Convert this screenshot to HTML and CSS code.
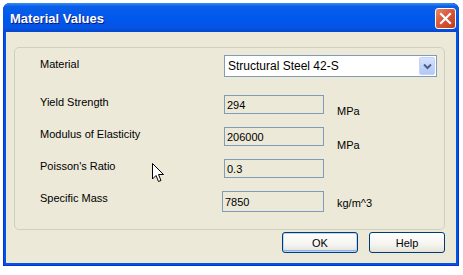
FILE: index.html
```html
<!DOCTYPE html>
<html lang="en">

<head>
    <meta charset="UTF-8">
    <title>Material Values</title>
    <link rel="stylesheet" href="styles.css">
</head>

<body>
    <div class="window">
        <!-- Title bar -->
        <div class="titlebar">
            <span class="title">Material Values</span>
            <button class="close-btn" aria-label="Close">
                <svg width="13" height="13" viewBox="0 0 13 13">
                    <path d="M2 2 L11 11 M11 2 L2 11" stroke="#fff" stroke-width="2.2" stroke-linecap="square" />
                </svg>
            </button>
        </div>

        <div class="client">
            <div class="groupbox">
                <div class="row row-first">
                    <label class="label label-combo">Material</label>
                    <div class="combo">
                        <span class="combo-text">Structural Steel 42-S</span>
                        <span class="combo-arrow">
                            <svg width="9" height="7" viewBox="0 0 9 7">
                                <path d="M1 1.5 L4.5 5 L8 1.5" fill="none" stroke="#4d6185" stroke-width="2" />
                            </svg>
                        </span>
                    </div>
                </div>
                <div class="row">
                    <label class="label">Yield Strength</label>
                    <div class="field">294</div>
                    <span class="unit">MPa</span>
                </div>
                <div class="row">
                    <label class="label">Modulus of Elasticity</label>
                    <div class="field">206000</div>
                    <span class="unit unit-low">MPa</span>
                </div>
                <div class="row">
                    <label class="label">Poisson's Ratio</label>
                    <div class="field">0.3</div>
                </div>
                <div class="row">
                    <label class="label">Specific Mass</label>
                    <div class="field field-mass">7850</div>
                    <span class="unit unit-mass">kg/m^3</span>
                </div>
            </div>

            <div class="buttons">
                <button class="btn btn-default">OK</button>
                <button class="btn">Help</button>
            </div>
        </div>

        <!-- mouse pointer over the dialog -->
        <svg class="cursor" width="13" height="20" viewBox="0 0 13 20">
            <path d="M0.5 0.5 L0.5 16 L4 12.5 L6.5 18.5 L9 17.5 L6.5 11.5 L11.5 11.5 Z" fill="#fff" stroke="#000" stroke-width="1" stroke-linejoin="miter" />
        </svg>
    </div>
</body>

</html>
```

FILE: styles.css
```css
body {
    margin: 0;
    padding: 3px 0 0 3px;
    background-color: #fff;
    font-family: "Liberation Sans", Arial, sans-serif;
    font-size: 11px;
    color: #000;
}

.window {
    position: relative;
    width: 456px;
    height: 263px;
    display: flex;
    flex-direction: column;
    background: #0553e1;
    border-radius: 7px 7px 0 0;
    box-shadow: inset 0 0 0 1px #0831d9;
    box-sizing: border-box;
}

/* Title bar */
.titlebar {
    height: 29px;
    display: flex;
    align-items: center;
    justify-content: space-between;
    padding: 0 3px 0 7px;
    border-radius: 7px 7px 0 0;
    background: linear-gradient(to bottom, #3a8cf5 0%, #0a5fe8 12%, #0058ee 50%, #0554e4 85%, #0347d0 100%);
}

.title {
    color: #fff;
    font-weight: bold;
    font-size: 13px;
    text-shadow: 1px 1px 0 #0a1883;
    margin-top: 1px;
}

.close-btn {
    width: 21px;
    height: 21px;
    padding: 0;
    margin-top: 2px;
    display: flex;
    align-items: center;
    justify-content: center;
    border: 1px solid #fff;
    border-radius: 3px;
    background: linear-gradient(135deg, #e8876a 0%, #d9583a 45%, #c13d1c 100%);
}

/* Client area */
.client {
    flex: 1;
    margin: 0 3px 3px 3px;
    background-color: #ece9d8;
    padding: 15px 11px 0 8px;
    display: flex;
    flex-direction: column;
}

.groupbox {
    height: 183px;
    border: 1px solid #d0d0bf;
    border-radius: 5px;
    box-sizing: border-box;
    padding: 7px 0 0 25px;
}

.row {
    display: flex;
    align-items: flex-start;
    height: 32px;
}

.row-first {
    height: 40px;
}

.label {
    width: 184px;
    line-height: 14px;
    flex-shrink: 0;
}

.label-combo {
    margin-top: 2px;
}

.combo {
    width: 213px;
    height: 22px;
    box-sizing: border-box;
    border: 1px solid #7f9db9;
    background-color: #fff;
    display: flex;
    align-items: center;
    justify-content: space-between;
    padding: 1px 1px 1px 3px;
}

.combo-text {
    font-size: 12px;
    margin-top: -1px;
}

.combo-arrow {
    width: 16px;
    height: 18px;
    display: flex;
    align-items: center;
    justify-content: center;
    border-radius: 2px;
    background: linear-gradient(to bottom, #d6e3fd 0%, #bfd2fa 60%, #b3c8f7 100%);
    border: 1px solid #c3d3fb;
    box-sizing: border-box;
}

.field {
    width: 100px;
    height: 19px;
    box-sizing: border-box;
    border: 1px solid #7f9db9;
    padding: 2px 0 0 2px;
    line-height: 14px;
}

.field-mass {
    width: 102px;
    height: 21px;
    margin-left: -2px;
    padding-top: 3px;
}

.unit {
    margin: 9px 0 0 13px;
    line-height: 14px;
}

.unit-low {
    margin-top: 11px;
}

.unit-mass {
    margin-top: 5px;
}

/* Buttons */
.buttons {
    display: flex;
    justify-content: flex-end;
    gap: 11px;
    padding-top: 2px;
}

.btn {
    width: 76px;
    height: 21px;
    padding: 0;
    font-family: "Liberation Sans", Arial, sans-serif;
    font-size: 11px;
    color: #000;
    border: 1px solid #003c74;
    border-radius: 3px;
    background: linear-gradient(to bottom, #ffffff 0%, #f5f4ef 60%, #e3e2da 100%);
}

.btn-default {
    box-shadow: inset 0 0 0 1px #bcd4f6, inset 0 -1px 0 1px #89adf0;
}

.cursor {
    position: absolute;
    left: 149px;
    top: 160px;
}
```
